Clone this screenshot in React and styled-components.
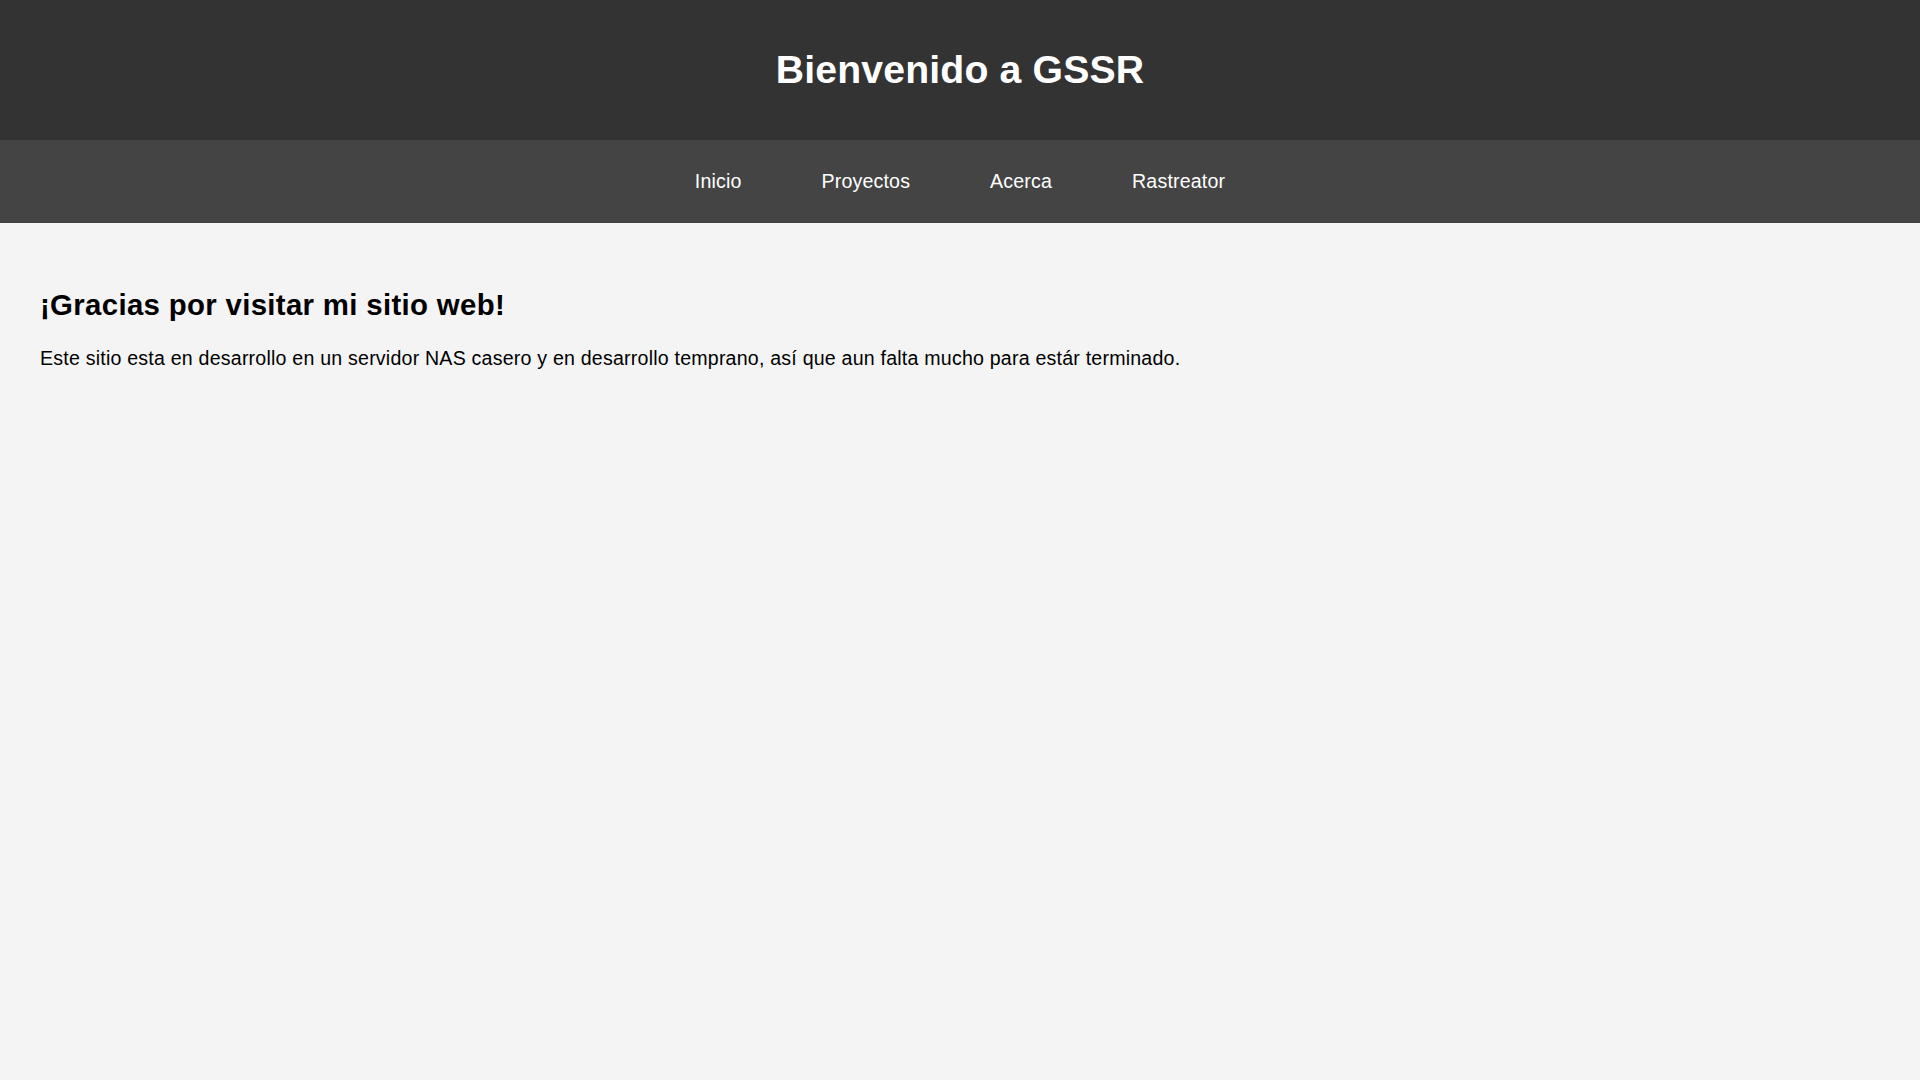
import React from "react";
import styled, { createGlobalStyle } from "styled-components";

const GlobalStyle = createGlobalStyle`
  html, body {
    margin: 0;
    padding: 0;
    background: #f4f4f4;
    font-family: "Liberation Sans", Arial, sans-serif;
    letter-spacing: 0.01em;
    color: #000;
  }
`;

const Header = styled.header`
  background: #333;
  color: #fff;
  text-align: center;
  padding: 47px 0 48px;
`;

const Title = styled.h1`
  margin: 0;
  font-size: 39.2px;
  line-height: 45px;
  font-weight: bold;
`;

const Nav = styled.nav`
  background: #444;
  padding: 30px 0;
  display: flex;
  justify-content: center;
  gap: 80px;
`;

const NavLink = styled.a`
  color: #fff;
  text-decoration: none;
  font-size: 19.6px;
  line-height: 23px;
`;

const Main = styled.main`
  padding: 39px 40px;
`;

const Heading = styled.h2`
  margin: 26px 0 25px;
  font-size: 29.4px;
  line-height: 34px;
  font-weight: bold;
  letter-spacing: 0.011em;
`;

const Text = styled.p`
  margin: 0;
  font-size: 19.6px;
  line-height: 22.5px;
  letter-spacing: 0.0105em;
`;

const links = ["Inicio", "Proyectos", "Acerca", "Rastreator"];

export default function App() {
  return (
    <>
      <GlobalStyle />
      <Header>
        <Title>Bienvenido a GSSR</Title>
      </Header>
      <Nav>
        {links.map((l) => (
          <NavLink key={l} href="#">
            {l}
          </NavLink>
        ))}
      </Nav>
      <Main>
        <Heading>¡Gracias por visitar mi sitio web!</Heading>
        <Text>
          Este sitio esta en desarrollo en un servidor NAS casero y en
          desarrollo temprano, así que aun falta mucho para estár terminado.
        </Text>
      </Main>
    </>
  );
}
